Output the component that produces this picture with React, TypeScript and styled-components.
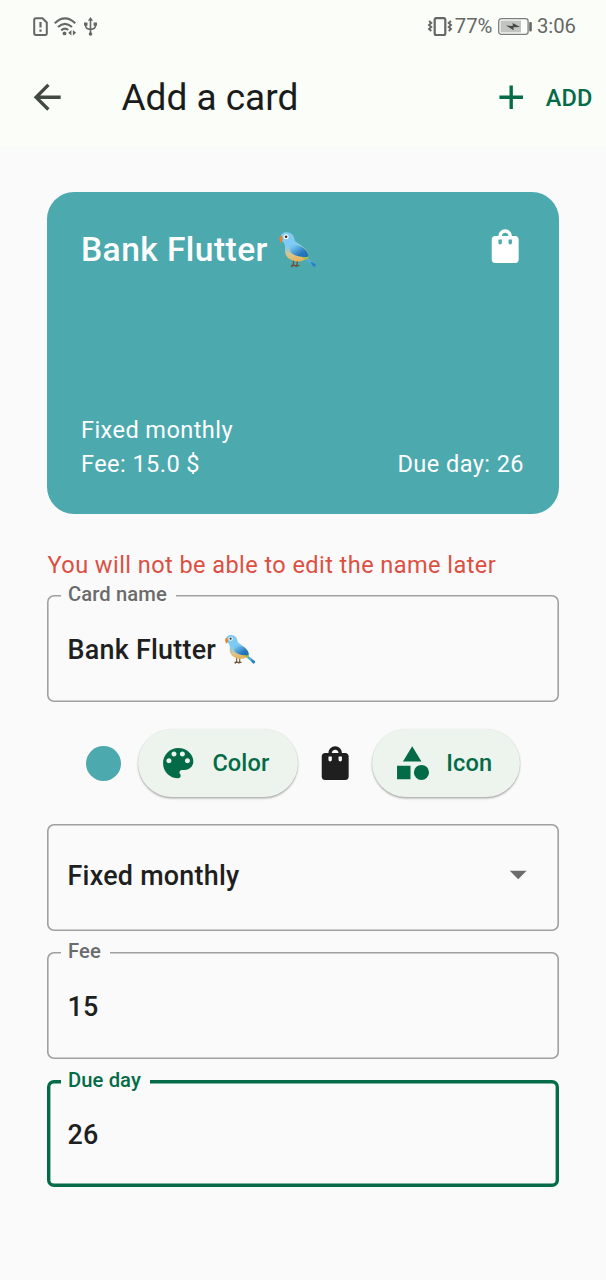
import React from 'react';
import styled, { createGlobalStyle } from 'styled-components';

const GREEN = '#036b47';
const TEAL = '#4ca9ae';
const PAGE = '#fafafa';
const INK = '#1e1f1e';

const GlobalStyle = createGlobalStyle`
  *, *::before, *::after { box-sizing: border-box; }
  body { margin: 0; background: ${PAGE}; font-family: Roboto, "Liberation Sans", sans-serif; }
`;

const Screen = styled.div`
  width: 606px;
  height: 1280px;
  overflow: hidden;
  background: ${PAGE};
  color: ${INK};
`;

const Header = styled.header`
  height: 147px;
  background: #fbfdf8;
`;

const StatusBar = styled.div`
  height: 52px;
  padding: 0 30px 0 33px;
  display: flex;
  align-items: center;
  justify-content: space-between;
  color: #656765;
`;

const StatusGroup = styled.div`
  display: flex;
  align-items: center;
`;

const StatusText = styled.span<{ $left: number }>`
  margin-left: ${p => p.$left}px;
  font-size: 20.3px;
  line-height: 24px;
`;

const StatusIcon = styled.svg<{ $left?: number }>`
  display: block;
  margin-left: ${p => p.$left ?? 0}px;
  overflow: visible;
`;

const AppBar = styled.div`
  height: 91px;
  padding: 0 13.5px 0 27px;
  display: flex;
  align-items: center;
  color: #414942;
`;

const Title = styled.h1`
  margin: 0 auto 0 54px;
  font-size: 37px;
  line-height: 44px;
  font-weight: 400;
  color: #191c1a;
`;

const AddAction = styled.button`
  display: flex;
  align-items: center;
  gap: 14px;
  padding: 0;
  border: 0;
  background: none;
  font: 500 23.5px/28px Roboto, sans-serif;
  letter-spacing: 0.17px;
  color: ${GREEN};
`;

const AddLabel = styled.span`
  padding-top: 2px;
`;

const Body = styled.main`
  padding: 45px 47px 0;
`;

const BankCard = styled.section`
  height: 322px;
  padding: 34px 34px 33px;
  border-radius: 27px;
  background: ${TEAL};
  color: #fff;
  display: flex;
  flex-direction: column;
  justify-content: space-between;
`;

const CardRow = styled.div`
  display: flex;
  justify-content: space-between;
  align-items: flex-start;
`;

const CardName = styled.h2`
  margin: 0;
  padding-top: 1px;
  display: flex;
  align-items: center;
  gap: 10px;
  font-size: 33.6px;
  line-height: 46px;
  font-weight: 500;
  letter-spacing: 0.42px;
`;

const CardText = styled.p<{ $right?: number }>`
  margin: 0 ${p => p.$right ?? 0}px 0 0;
  font-size: 23.57px;
  line-height: 34px;
  letter-spacing: 0.42px;
`;

const Warning = styled.p`
  margin: 34px 0 0 0.5px;
  height: 47px;
  font-size: 23.57px;
  line-height: 34px;
  letter-spacing: 0.42px;
  color: #dd4f42;
  white-space: nowrap;
`;

const Field = styled.div<{ $focused?: boolean; $top?: number; $lift?: number }>`
  position: relative;
  height: 107px;
  margin-top: ${p => p.$top ?? 0}px;
  border-radius: 7px;
  box-shadow: inset 0 0 0 ${p => (p.$focused ? `3.4px ${GREEN}` : '1.6px #a0a0a0')};
  padding: 0 20.5px ${p => p.$lift ?? 0}px;
  display: flex;
  align-items: center;
  justify-content: space-between;
`;

const FieldLabel = styled.label<{ $focused?: boolean }>`
  position: absolute;
  top: ${p => (p.$focused ? -12 : -13)}px;
  left: 14px;
  padding: 0 9px 0 7px;
  background: ${PAGE};
  font-size: 20.2px;
  line-height: 24px;
  font-weight: 500;
  letter-spacing: 0.1px;
  color: ${p => (p.$focused ? GREEN : '#6b6b6b')};
  white-space: nowrap;
`;

const FieldValue = styled.span`
  display: flex;
  align-items: center;
  gap: 8px;
  padding-top: 2px;
  font-size: 26.9px;
  line-height: 32px;
  font-weight: 500;
  letter-spacing: 0.25px;
`;

const Pickers = styled.div`
  height: 122px;
  padding: 0 38px 0 39px;
  display: flex;
  align-items: center;
`;

const Swatch = styled.span`
  width: 35px;
  height: 35px;
  border-radius: 50%;
  background: ${TEAL};
`;

const PillButton = styled.button<{ $width: number; $left: number; $gap: number }>`
  width: ${p => p.$width}px;
  height: 68px;
  margin-left: ${p => p.$left}px;
  padding: 0 0 0 20px;
  display: flex;
  align-items: center;
  gap: ${p => p.$gap}px;
  border: 0;
  border-radius: 34px;
  background: #edf4ed;
  box-shadow: 0 1.5px 2px rgba(0, 0, 0, 0.3), 0 0 1px rgba(0, 0, 0, 0.12);
  font: 500 23.57px/28px Roboto, sans-serif;
  letter-spacing: 0.1px;
  color: ${GREEN};
`;

const IconSvg = styled.svg<{ $left?: number; $right?: number }>`
  flex: none;
  width: 40.4px;
  height: 40.4px;
  display: block;
  fill: currentColor;
  margin-left: ${p => p.$left ?? 0}px;
  margin-right: ${p => p.$right ?? 0}px;
`;

const BAG =
  'M18 6h-2c0-2.21-1.79-4-4-4S8 3.79 8 6H6c-1.1 0-2 .9-2 2v12c0 1.1.9 2 2 2h12c1.1 0 2-.9 2-2V8c0-1.1-.9-2-2-2zm-8 4c0 .55-.45 1-1 1s-1-.45-1-1V8h2v2zm2-6c1.1 0 2 .9 2 2h-4c0-1.1.9-2 2-2zm4 6c0 .55-.45 1-1 1s-1-.45-1-1V8h2v2z';
const PALETTE =
  'M12 3c-4.97 0-9 4.03-9 9s4.03 9 9 9c.83 0 1.5-.67 1.5-1.5 0-.39-.15-.74-.39-1.01-.23-.26-.38-.61-.38-.99 0-.83.67-1.5 1.5-1.5H16c2.76 0 5-2.24 5-5 0-4.42-4.03-8-9-8zm-5.5 9c-.83 0-1.5-.67-1.5-1.5S5.67 9 6.5 9 8 9.67 8 10.5 7.33 12 6.5 12zm3-4C8.67 8 8 7.33 8 6.5S8.67 5 9.5 5s1.5.67 1.5 1.5S10.33 8 9.5 8zm5 0c-.83 0-1.5-.67-1.5-1.5S13.67 5 14.5 5s1.5.67 1.5 1.5S15.33 8 14.5 8zm3 4c-.83 0-1.5-.67-1.5-1.5S16.67 9 17.5 9s1.5.67 1.5 1.5-.67 1.5-1.5 1.5z';
const BACK = 'M20 11H7.83l5.59-5.59L12 4l-8 8 8 8 1.41-1.41L7.83 13H20v-2z';
const PLUS = 'M19 13h-6v6h-2v-6H5v-2h6V5h2v6h6v2z';
const CATEGORY = 'M12 2l-5.5 9h11zM17.5 13a4.5 4.5 0 1 0 0 9 4.5 4.5 0 0 0 0-9zM3 13.5h8v8H3z';
const DROPDOWN = 'M7 10l5 5 5-5z';

function Icon({ d, left, right, color }: { d: string; left?: number; right?: number; color?: string }) {
  return (
    <IconSvg viewBox="0 0 24 24" $left={left} $right={right} color={color} aria-hidden>
      <path d={d} />
    </IconSvg>
  );
}

function Bird({ size }: { size: number }) {
  const id = `wing${size}`;
  return (
    <svg width={size} height={size * 0.966} viewBox="0 0 116 112" role="img" aria-label="bird">
      <defs>
        <linearGradient id={`${id}b`} x1="0.3" y1="0" x2="0.5" y2="1">
          <stop offset="0.45" stopColor="#7fcbf3" />
          <stop offset="0.75" stopColor="#d9c58c" />
          <stop offset="1" stopColor="#e8b35c" />
        </linearGradient>
        <linearGradient id={`${id}w`} x1="0" y1="0" x2="1" y2="1">
          <stop offset="0.15" stopColor="#74c4f0" />
          <stop offset="0.65" stopColor="#2478be" />
          <stop offset="1" stopColor="#1e6bb0" />
        </linearGradient>
      </defs>
      <path d="M84 76 L112 98 Q115 104 108 108 Q101 107 98 99 L80 84z" fill="#58a9d3" />
      <path d="M97 91 L112 99 Q114 105 108 107 Q101 105 97 91z" fill="#2580c4" />
      <path d="M46 84v17M57 85v17M40 103h22M45 99l-4 7M57 99l-3 7" stroke="#705239" strokeWidth="4" fill="none" strokeLinecap="round" />
      <path d="M8 20C8 8 17 3 27 4C40 5 48 13 50 29C58 38 78 45 87 62C93 75 82 88 67 90C43 93 22 80 21 62C20 50 23 46 18 36Q10 31 8 20z" fill={`url(#${id}b)`} />
      <path d="M39 43C57 38 77 46 86 62C91 71 91 77 87 80C70 77 43 74 37 61C33 53 34 47 39 43z" fill={`url(#${id}w)`} />
      <path d="M67 75Q83 81 91 74Q92 82 84 86Q76 85 67 75z" fill="#a9bd4b" />
      <path d="M11 13Q3 15 4 24L8 35Q15 31 14 23z" fill="#e88428" />
      <circle cx="24" cy="17" r="7.5" fill="#fff" />
      <circle cx="24" cy="17" r="4" fill="#33302d" />
    </svg>
  );
}

export default function App() {
  return (
    <Screen>
      <GlobalStyle />
      <Header>
        <StatusBar>
          <StatusGroup>
            <StatusIcon width="15" height="19" viewBox="0 0 15 19" fill="none" stroke="currentColor" strokeWidth="2">
              <path d="M3 1.2h6.5l4.3 4.3v11a1.5 1.5 0 0 1-1.5 1.5H3a1.8 1.8 0 0 1-1.8-1.8V3A1.8 1.8 0 0 1 3 1.2z" />
              <path d="M7.5 5v5.5M7.5 12.5v2.3" strokeWidth="2.2" />
            </StatusIcon>
            <StatusIcon $left={6} width="22" height="19" viewBox="0 0 22 19" fill="none" stroke="currentColor" strokeWidth="2.2">
              <path d="M.8 6.2Q11-3.4 21.2 6.2M4 10Q11 3.6 18 10M7.2 13.4Q11 10 14.2 13" />
              <circle cx="10.5" cy="16.4" r="1.9" fill="currentColor" stroke="none" />
              <path d="M17.4 13v5.4l-3.2-2.7zM18.9 13v5.4l3.2-2.7z" fill="currentColor" stroke="none" />
            </StatusIcon>
            <StatusIcon $left={8} width="13" height="19" viewBox="0 0 13 19" fill="none" stroke="currentColor" strokeWidth="1.6">
              <path d="M6.5 2v15M1.8 7v2.6q0 2.3 4.7 2.8M11.3 7v2.6q0 2.3-4.8 2.8" />
              <path d="M6.5 0l2.6 3.8H3.9zM0 5.5h3.5v3.3H0zM9.6 5.5H13v3.3H9.6z" fill="currentColor" stroke="none" />
              <circle cx="6.5" cy="17" r="1.8" fill="currentColor" stroke="none" />
            </StatusIcon>
          </StatusGroup>
          <StatusGroup>
            <StatusIcon width="24" height="19" viewBox="0 0 24 19" fill="none" stroke="currentColor">
              <rect x="6.7" y="1.2" width="10.6" height="16.8" rx="1.6" strokeWidth="2.2" />
              <path d="M1 4l2.3 2L1 8l2.3 2L1 12l2.3 2M23 4l-2.3 2L23 8l-2.3 2L23 12l-2.3 2" strokeWidth="1.9" />
            </StatusIcon>
            <StatusText $left={3}>77%</StatusText>
            <StatusIcon $left={5.5} width="34" height="17" viewBox="0 0 34 17">
              <rect x=".7" y=".7" width="29.4" height="15.6" rx="2.6" fill="none" stroke="#7c7e7b" strokeWidth="1.3" />
              <rect x="2.6" y="2.6" width="20.4" height="11.8" fill="#c2c4c1" />
              <path d="M8 7.6l6.8.4L14.6 5l7.4 4-6.6.3.3 3z" fill="#454745" />
              <rect x="31.2" y="4" width="2.6" height="9.5" rx="1" fill="currentColor" />
            </StatusIcon>
            <StatusText $left={5}>3:06</StatusText>
          </StatusGroup>
        </StatusBar>
        <AppBar>
          <Icon d={BACK} />
          <Title>Add a card</Title>
          <AddAction>
            <Icon d={PLUS} />
            <AddLabel>ADD</AddLabel>
          </AddAction>
        </AppBar>
      </Header>
      <Body>
        <BankCard>
          <CardRow>
            <CardName>
              Bank Flutter
              <Bird size={39} />
            </CardName>
            <Icon d={BAG} />
          </CardRow>
          <div>
            <CardText>Fixed monthly</CardText>
            <CardRow>
              <CardText>Fee: 15.0 $</CardText>
              <CardText $right={1}>Due day: 26</CardText>
            </CardRow>
          </div>
        </BankCard>
        <Warning>You will not be able to edit the name later</Warning>
        <Field>
          <FieldLabel>Card name</FieldLabel>
          <FieldValue>
            Bank Flutter
            <Bird size={32} />
          </FieldValue>
        </Field>
        <Pickers>
          <Swatch />
          <PillButton $width={160} $left={17} $gap={14}>
            <Icon d={PALETTE} />
            Color
          </PillButton>
          <Icon d={BAG} left={17} />
          <PillButton $width={148} $left={17} $gap={13.5}>
            <Icon d={CATEGORY} />
            Icon
          </PillButton>
        </Pickers>
        <Field $lift={6}>
          <FieldValue>Fixed monthly</FieldValue>
          <Icon d={DROPDOWN} color="#6b6b6b" />
        </Field>
        <Field $top={21}>
          <FieldLabel>Fee</FieldLabel>
          <FieldValue>15</FieldValue>
        </Field>
        <Field $top={21} $focused>
          <FieldLabel $focused>Due day</FieldLabel>
          <FieldValue>26</FieldValue>
        </Field>
      </Body>
    </Screen>
  );
}
